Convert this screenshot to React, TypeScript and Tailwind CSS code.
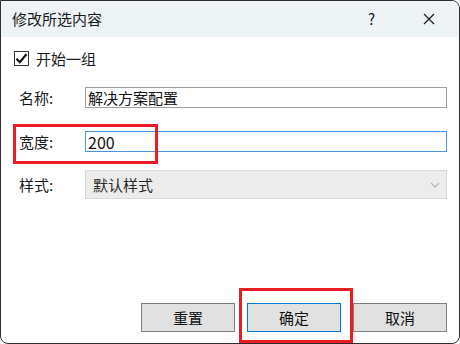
import React from 'react';

const FONT = { fontFamily: '"Noto Sans CJK SC", "Noto Sans", sans-serif' };

// Form label column, fixed width so every field starts at the same x
function Label({ children }: { children: React.ReactNode }) {
  return <div className="w-[66px] shrink-0 text-[15px] leading-[20px] text-[#1a1a1a]">{children}</div>;
}

function DialogButton({ label, primary }: { label: string; primary?: boolean }) {
  return (
    <button
      className={`w-[94px] h-[29px] bg-[#e1e1e1] text-[15px] leading-[20px] text-[#111] border ${
        primary ? 'border-[#0078d7]' : 'border-[#7f7f7f]'
      }`}
    >
      {label}
    </button>
  );
}

export default function App() {
  return (
    <div
      className="relative w-[460px] h-[344px] bg-white flex flex-col border border-[#2e2e2e] rounded-tr-[8px] rounded-b-[8px] overflow-hidden"
      style={FONT}
    >
      {/* Title bar */}
      <div className="h-[36px] shrink-0 bg-[#eef3f6] flex items-center pl-[11px]">
        <div className="text-[15px] leading-[20px] text-[#1a1a1a]">修改所选内容</div>
        <div className="ml-auto mr-[48px] text-[15px] leading-[20px] text-[#1a1a1a]">?</div>
        <svg className="mr-[24px]" width="12" height="12" viewBox="0 0 12 12">
          <path d="M1 1 L11 11 M11 1 L1 11" stroke="#1a1a1a" strokeWidth="1.2" fill="none" />
        </svg>
      </div>

      {/* Body */}
      <div className="flex-1 flex flex-col pl-[13px] pr-[12px] pt-[14px] pb-[11px]">
        {/* Checkbox */}
        <div className="flex items-center gap-[7px] h-[15px]">
          <div className="w-[15px] h-[15px] border border-[#333] bg-white flex items-center justify-center">
            <svg width="13" height="13" viewBox="0 0 13 13">
              <path d="M1.5 6.8 L4.8 10.2 L11.5 2.2" stroke="#111" strokeWidth="2.2" fill="none" />
            </svg>
          </div>
          <div className="text-[15px] leading-[20px] text-[#1a1a1a]">开始一组</div>
        </div>

        {/* Name */}
        <div className="flex items-center pl-[5px] mt-[21px]">
          <Label>名称:</Label>
          <div className="flex-1 h-[21px] border border-[#a0a0a0] flex items-center pl-[2px] text-[15px] leading-[20px] text-[#111]">
            解决方案配置
          </div>
        </div>

        {/* Width */}
        <div className="flex items-center pl-[5px] mt-[23px]">
          <Label>宽度:</Label>
          <div className="flex-1 h-[21px] border border-[#4a95e0] flex items-center pl-[2px] text-[16px] leading-[20px] text-[#111]">
            200
          </div>
        </div>

        {/* Style */}
        <div className="flex items-center pl-[5px] mt-[18px]">
          <Label>样式:</Label>
          <div className="flex-1 h-[29px] border border-[#d9d9d9] bg-[#ececec] flex items-center pl-[7px] pr-[6px] text-[15px] leading-[20px] text-[#2a2a2a]">
            <span>默认样式</span>
            <svg className="ml-auto" width="10" height="6" viewBox="0 0 10 6">
              <path d="M1 1 L5 5 L9 1" stroke="#b5b5b5" strokeWidth="1.2" fill="none" />
            </svg>
          </div>
        </div>

        {/* Buttons */}
        <div className="mt-auto flex justify-end gap-[12px]">
          <DialogButton label="重置" />
          <DialogButton label="确定" primary />
          <DialogButton label="取消" />
        </div>
      </div>

      {/* Red annotation boxes over the dialog */}
      <div className="absolute left-[12px] top-[123px] w-[145px] h-[40px] border-[3px] border-[#ec1c24]" />
      <div className="absolute left-[238px] top-[287px] w-[114px] h-[55px] border-[3px] border-[#ec1c24]" />
    </div>
  );
}
